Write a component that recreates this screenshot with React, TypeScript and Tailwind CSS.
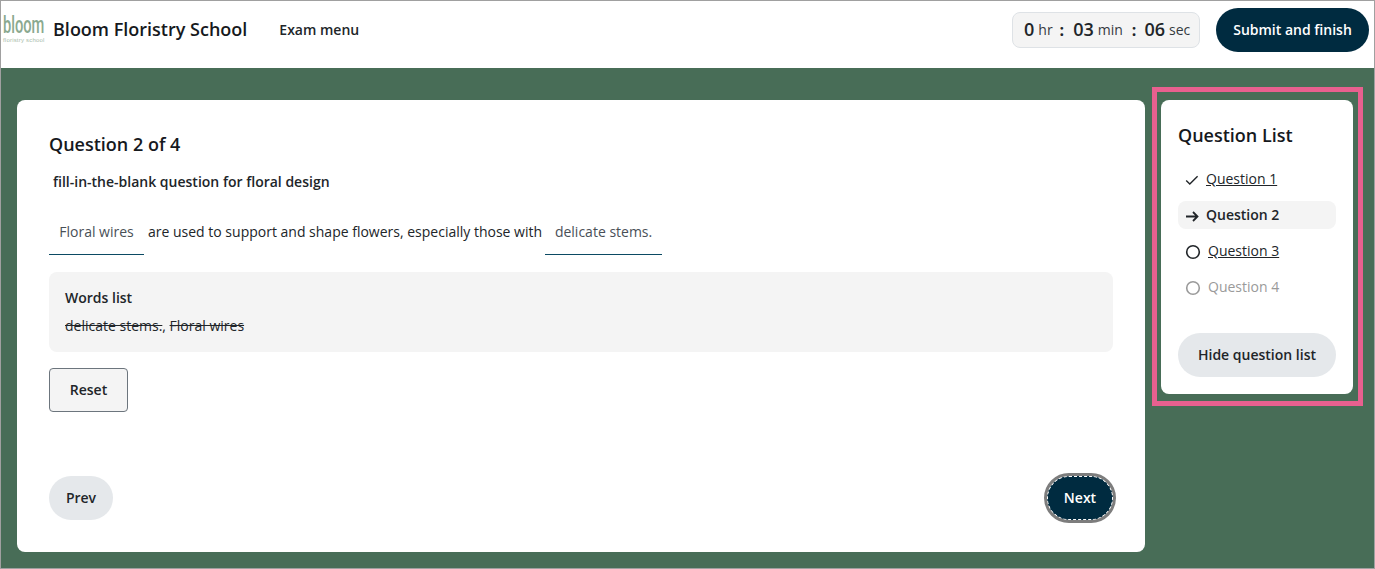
import React from "react";

const Arrow = () => (
  <svg width="14" height="14" viewBox="0 0 14 14" fill="none" stroke="#212529" strokeWidth="1.8" className="shrink-0 mt-[3px]">
    <path d="M1 7.5h11.5M8 3l4.5 4.5L8 12" />
  </svg>
);
const Check = () => (
  <svg width="14" height="14" viewBox="0 0 14 14" fill="none" stroke="#212529" strokeWidth="1.4" className="shrink-0 mt-[3px]">
    <path d="M1.2 7.4l3.6 3.6L12.6 3.2" />
  </svg>
);
const Ring = ({ c }: { c: string }) => (
  <svg width="16" height="16" viewBox="0 0 16 16" fill="none" stroke={c} strokeWidth="1.6" className="shrink-0 mt-[4px]">
    <circle cx="8" cy="8" r="6.3" />
  </svg>
);

const Blank = ({ text, w }: { text: string; w: string }) => (
  <span className={`${w} h-[46px] flex items-center justify-center border-b border-[#0b4a63] text-[#495057]`}>{text}</span>
);

export default function App() {
  return (
    <div className="h-[569px] w-[1375px] flex flex-col border border-[#a0a0a0] bg-[#486d57] text-[#212529] font-['Open_Sans',sans-serif] overflow-hidden">
      <header className="h-[67px] shrink-0 bg-white flex items-center pl-[2px] pr-[5px] pb-[10px]">
        <div className="w-[42px] h-[30px] mr-[8px] flex flex-col text-[#8aa98f] leading-none">
          <span className="font-['Roboto',sans-serif] font-medium text-[24px] leading-[20px] origin-left scale-x-[0.61] whitespace-nowrap">bloom</span>
          <span className="mt-[2px] font-['Liberation_Sans',sans-serif] text-[6px] leading-[7px] tracking-[0.2px] whitespace-nowrap text-[#a9bcab]">floristry school</span>
        </div>
        <span className="text-[18px] font-semibold leading-[24px] pb-[2px] text-[#16191d]">Bloom Floristry School</span>
        <span className="ml-[32px] text-[14px] font-semibold text-[#212529]">Exam menu</span>
        <div className="ml-auto flex items-center h-[36px] w-[188px] px-[11px] rounded-[8px] border border-[#dee2e6] bg-[#f4f4f4] text-[14px] whitespace-nowrap">
          <span className="text-[18px] font-semibold">0</span>
          <span className="ml-[4px] text-[#343a40]">hr</span>
          <span className="ml-[7px] mr-[9px] font-bold text-[16px]">:</span>
          <span className="text-[18px] font-semibold">03</span>
          <span className="ml-[4px] text-[#343a40]">min</span>
          <span className="ml-[9px] mr-[8px] font-bold text-[16px]">:</span>
          <span className="text-[18px] font-semibold">06</span>
          <span className="ml-[4px] text-[#343a40]">sec</span>
        </div>
        <button className="ml-[16px] h-[44px] w-[153px] rounded-[22px] bg-[#002b40] text-white text-[14px] font-semibold">Submit and finish</button>
      </header>
      <main className="flex-1 flex items-start pt-[32px] pl-[16px] pr-[21px] gap-[16px]">
        <section className="w-[1128px] h-[452px] bg-white rounded-[8px] pt-[32px] px-[32px] flex flex-col">
          <h2 className="text-[18px] font-semibold leading-[24px] text-[#16191d]">Question 2 of 4</h2>
          <p className="ml-[4px] mt-[16px] text-[14px] font-semibold leading-[20px]">fill-in-the-blank question for floral design</p>
          <div className="mt-[17px] flex items-center text-[14px] text-[#212529] leading-[20px]">
            <Blank text="Floral wires" w="w-[95px]" />
            <span className="ml-[4px] mr-[3px]">are used to support and shape flowers, especially those with</span>
            <Blank text="delicate stems." w="w-[117px]" />
          </div>
          <div className="mt-[17px] h-[80px] rounded-[8px] bg-[#f4f4f4] px-[16px] pt-[16px]">
            <div className="text-[14px] font-semibold leading-[20px]">Words list</div>
            <div className="mt-[8px] text-[14px] leading-[20px]">
              <span className="line-through">delicate stems.</span>, <span className="line-through">Floral wires</span>
            </div>
          </div>
          <button className="mt-[16px] self-start w-[79px] h-[44px] pb-[2px] rounded-[4px] border border-[#6c757d] bg-[#f4f4f4] text-[14px] font-semibold">Reset</button>
          <div className="mt-[64px] flex items-center justify-between">
            <button className="w-[64px] h-[44px] pb-[2px] rounded-[22px] bg-[#e5e8eb] text-[14px] font-semibold">Prev</button>
            <button className="w-[66px] h-[44px] pb-[2px] rounded-[22px] bg-[#002b40] text-white text-[14px] font-semibold outline-[3px] outline-[#7d7d7d] outline-offset-0 border border-dashed border-white">Next</button>
          </div>
        </section>
        <aside className="relative w-[192px] h-[294px] bg-white rounded-[8px] px-[17px] pt-[23px]">
          <div className="absolute left-[-9px] right-[-10px] top-[-13px] bottom-[-12px] border-[5px] border-[#e8608f] pointer-events-none" />
          <h2 className="text-[18px] font-semibold leading-[24px] text-[#16191d]">Question List</h2>
          <ul className="mt-[18px] text-[14px] flex flex-col gap-[8px]">
            <li className="h-[28px] flex items-center pl-[7px] pb-[2px] gap-[7px]"><Check /><span className="underline">Question 1</span></li>
            <li className="h-[28px] flex items-center pl-[7px] pb-[2px] gap-[7px] rounded-[8px] bg-[#f4f4f4] font-semibold"><Arrow /><span>Question 2</span></li>
            <li className="h-[28px] flex items-center pl-[7px] pb-[2px] gap-[7px]"><Ring c="#212529" /><span className="underline">Question 3</span></li>
            <li className="h-[28px] flex items-center pl-[7px] pb-[2px] gap-[7px] text-[#9a9a9a]"><Ring c="#9a9a9a" /><span>Question 4</span></li>
          </ul>
          <button className="mt-[32px] w-[158px] h-[44px] pb-[2px] rounded-[22px] bg-[#e5e8eb] text-[14px] font-semibold">Hide question list</button>
        </aside>
      </main>
    </div>
  );
}
